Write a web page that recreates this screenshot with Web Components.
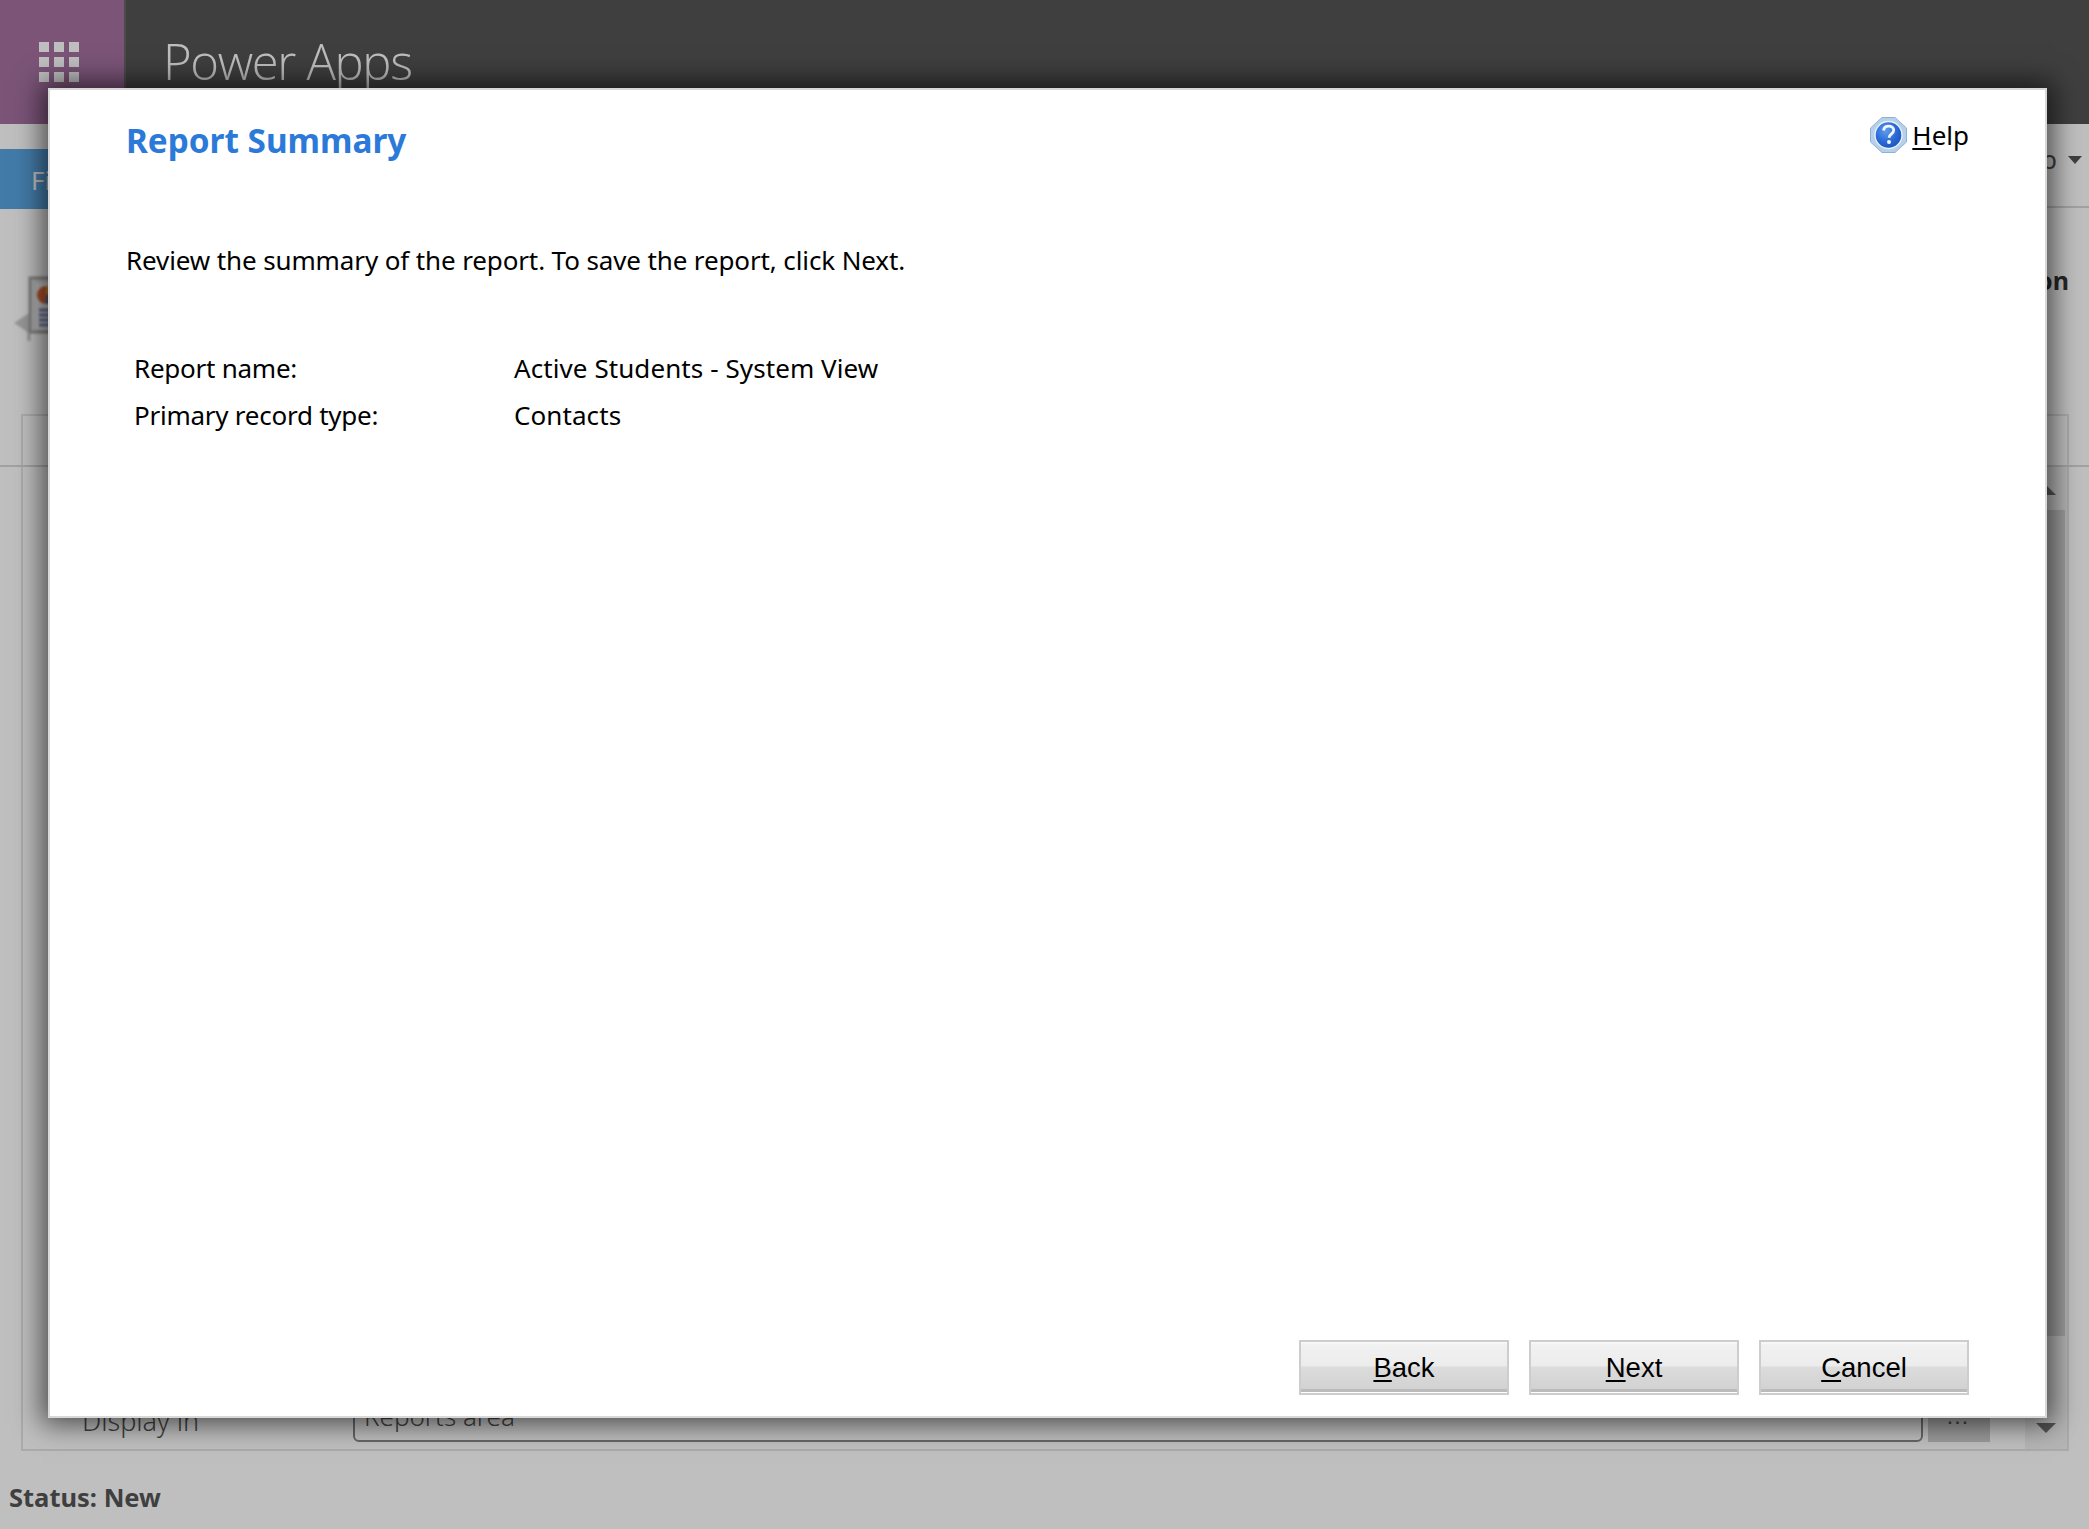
<!DOCTYPE html>
<html><head><meta charset="utf-8"><style>
html,body{margin:0;padding:0;background:#fff;height:100%;overflow:hidden}
</style></head><body>
<crm-app></crm-app>
<script>
const SANS='"Noto Sans","Open Sans",sans-serif';
function def(name,html){
  customElements.define(name,class extends HTMLElement{
    constructor(){super();this.attachShadow({mode:'open'}).innerHTML=html;}
  });
}
def('app-launcher',`<style>:host{display:block;width:124px;height:124px;background:#a470a0;padding:42px 0 0 39px;box-sizing:border-box;flex:none}
.g{display:grid;grid-template-columns:repeat(3,10px);grid-auto-rows:10px;gap:5px}
i{background:#fff;display:block}</style><div class="g"><i></i><i></i><i></i><i></i><i></i><i></i><i></i><i></i><i></i></div>`);
def('top-bar',`<style>:host{display:flex;height:124px;background:#555;flex:none}
.sep{width:2px;background:#666;flex:none}
.t{margin-left:37px;font:300 49px/1 "Open Sans",sans-serif;color:#fff;letter-spacing:-1.35px;padding-top:37px;box-sizing:border-box}</style><app-launcher></app-launcher><div class="sep"></div><div class="t">Power Apps</div>`);
def('ribbon-bar',`<style>:host{display:block;height:84px;background:#fff;border-bottom:2px solid #d8d8d8;box-sizing:border-box;flex:none;padding-top:25px;position:relative;font-family:${SANS}}
.row{display:flex;justify-content:space-between;align-items:flex-start}
.tab{width:90px;height:60px;background:#5aa5e0;color:#fff;font-size:26px;line-height:62px;padding-left:31px;box-sizing:border-box}
.r{color:#555;font-size:26px;display:flex;align-items:center;gap:11px;padding-right:7px;line-height:24px;margin-top:-2px}
.a{width:0;height:0;border:7px solid transparent;border-top:8px solid #555;border-bottom:0;margin-top:2px}</style>
<div class="row"><div class="tab">File</div><div class="r"><span>Help</span><span class="a"></span></div></div>`);
def('form-head',`<style>:host{display:flex;justify-content:space-between;height:206px;flex:none;box-sizing:border-box;padding:67px 20px 0 14px;font-family:${SANS}}
.h{font-weight:700;font-size:25px;color:#333;line-height:28px;margin-top:-9px}
svg{display:block;filter:blur(1px)}</style>
<svg width="60" height="70" viewBox="0 0 60 70"><path d="M0 48l15-10v20z" fill="#888" opacity=".45"/><path d="M15 56v10" stroke="#999" stroke-width="3" opacity=".6"/><rect x="16" y="3" width="40" height="54" fill="#e4e4e4" stroke="#a8a8a8" stroke-width="3"/><rect x="22" y="8" width="34" height="46" fill="#f6f6f6"/><circle cx="32" cy="20" r="9" fill="#e0663a"/><path d="M32 20l8 4a9 9 0 0 1-8 5z" fill="#4a7fb8"/><path d="M32 20v-9a9 9 0 0 1 8 5z" fill="#e8b04a"/><path d="M25 35h24M25 40h24M25 45h24M25 50h24" stroke="#7d86b8" stroke-width="3"/></svg>
<div class="h">Information</div>`);
def('form-panel',`<style>:host{display:flex;flex-direction:column;flex:1;min-height:0;margin:0 20px 0 21px;border:2px solid #e4e4e4;box-sizing:border-box;font-family:${SANS};color:#555}
.tabs{height:51px;border-bottom:2px solid #d8d8d8;box-sizing:border-box;margin:0 -22px 0 -23px;flex:none}
.main{flex:1;display:flex;min-height:0}
.body{flex:1;display:flex;flex-direction:column;justify-content:flex-end}
.field{display:flex;height:46px;padding:0 0 7px 59px}
.lab{font-size:27px;font-weight:300;width:271px;flex:none;line-height:34px;margin-top:8px}
.inp{flex:1;height:46px;border:2px solid #888;border-radius:6px;box-sizing:border-box;font-size:26px;font-weight:300;padding:3px 9px;line-height:30px}
.btn{width:62px;height:46px;background:#cfcfcf;margin:0 35px 0 5px;flex:none;text-align:center;font:700 16px/20px "Liberation Sans",sans-serif;letter-spacing:3px;padding-top:13px;box-sizing:border-box;color:#555}
.sb{width:42px;flex:none;background:#f2f2f2;display:flex;flex-direction:column;align-items:center;padding:18px 0 16px;box-sizing:border-box}
.thumb{flex:1;width:38px;background:#d2d2d2;margin:15px 2px 87px 0;align-self:flex-end}
.up,.dn{width:0;height:0;border:10px solid transparent;flex:none}.up{border-bottom:10px solid #707070;border-top:0}.dn{border-top:10px solid #707070;border-bottom:0}</style>
<div class="tabs"></div>
<div class="main"><div class="body"><div class="field"><div class="lab">Display in</div><div class="inp">Reports area</div><div class="btn">...</div></div></div>
<div class="sb"><div class="up"></div><div class="thumb"></div><div class="dn"></div></div></div>`);
def('status-bar',`<style>:host{display:block;height:78px;flex:none;box-sizing:border-box;padding:29px 0 0 9px;font:700 25.5px/34px ${SANS};color:#555}</style>Status: New`);
def('help-icon',`<style>:host{display:block;width:37px;height:36px;flex:none}svg{display:block;filter:blur(.4px)}</style>
<svg width="37" height="36" viewBox="0 0 37 36"><defs><radialGradient id="b" cx=".4" cy=".35" r=".75"><stop offset="0" stop-color="#5f9cf0"/><stop offset=".55" stop-color="#2a69d6"/><stop offset="1" stop-color="#1450b4"/></radialGradient></defs>
<path d="M12 .5h13L36.5 11v14L25 35.5H12L.5 25V11z" fill="#b7d0ea" stroke="#8db2d8"/>
<circle cx="18.5" cy="18" r="13.5" fill="url(#b)" stroke="#e8f0fa" stroke-width="1.4"/>
<path d="M13.5 13.5c.5-3 2.6-4.3 5.2-4.3 2.9 0 5 1.6 5 4.1 0 3.6-4.6 3.6-4.6 7.4" fill="none" stroke="#f2f6ff" stroke-width="2.8"/><circle cx="19" cy="25" r="2" fill="#f2f6ff"/></svg>`);
def('wizard-button',`<style>:host{display:block;width:210px;height:55px;border:2px solid #cdcdcd;box-sizing:border-box;background:linear-gradient(#fafafa 0,#f1f1f1 3px,#ececec 24px,#dcdcdc 25px,#d2d2d2 47px,#bbb 47px,#bbb 50px,#fff 50px);text-align:center;font:27.5px/52px "Liberation Sans",Arial,sans-serif;color:#000}</style><slot></slot>`);
def('summary-row',`<style>:host{display:grid;grid-template-columns:380px 1fr;height:47px;line-height:47px;padding-left:8px}
::slotted([slot=k]){letter-spacing:-.25px}::slotted([slot=v]){letter-spacing:.08px}</style><slot name="k"></slot><slot name="v"></slot>`);
def('wizard-dialog',`<style>:host{position:absolute;left:48px;top:88px;width:1999px;height:1330px;box-sizing:border-box;background:#fff;border:2px solid #d8d8d8;box-shadow:0 0 26px 6px rgba(0,0,0,.62);display:flex;flex-direction:column;padding:0 76px 21px 76px;font-family:${SANS};color:#000;font-size:26px}
.head{display:flex;justify-content:space-between;align-items:flex-start;height:95px;flex:none}
h1{margin:0;font-size:33.3px;font-weight:700;color:#2b79d8;line-height:42px;padding-top:29px}
.help{display:flex;gap:5px;margin-top:27px;align-items:center;line-height:36px}
u{text-underline-offset:3px}
.intro{margin-top:57px;line-height:36px;letter-spacing:-.12px}
.rows{margin-top:67px}
.foot{margin-top:auto;display:flex;justify-content:flex-end;gap:20px}</style>
<div class="head"><h1>Report Summary</h1><div class="help"><help-icon></help-icon><span><u>H</u>elp</span></div></div>
<div class="intro">Review the summary of the report. To save the report, click Next.</div>
<div class="rows"><summary-row><span slot="k">Report name:</span><span slot="v">Active Students - System View</span></summary-row><summary-row><span slot="k">Primary record type:</span><span slot="v">Contacts</span></summary-row></div>
<div class="foot"><wizard-button><u>B</u>ack</wizard-button><wizard-button><u>N</u>ext</wizard-button><wizard-button><u>C</u>ancel</wizard-button></div>`);
def('crm-app',`<style>:host{display:flex;flex-direction:column;height:1529px;width:2089px;position:relative;overflow:hidden;background:#fff}
.ov{position:absolute;inset:0;background:rgba(0,0,0,.25)}</style>
<top-bar></top-bar><ribbon-bar></ribbon-bar><form-head></form-head><form-panel></form-panel><status-bar></status-bar>
<div class="ov"></div><wizard-dialog></wizard-dialog>`);
</script></body></html>
